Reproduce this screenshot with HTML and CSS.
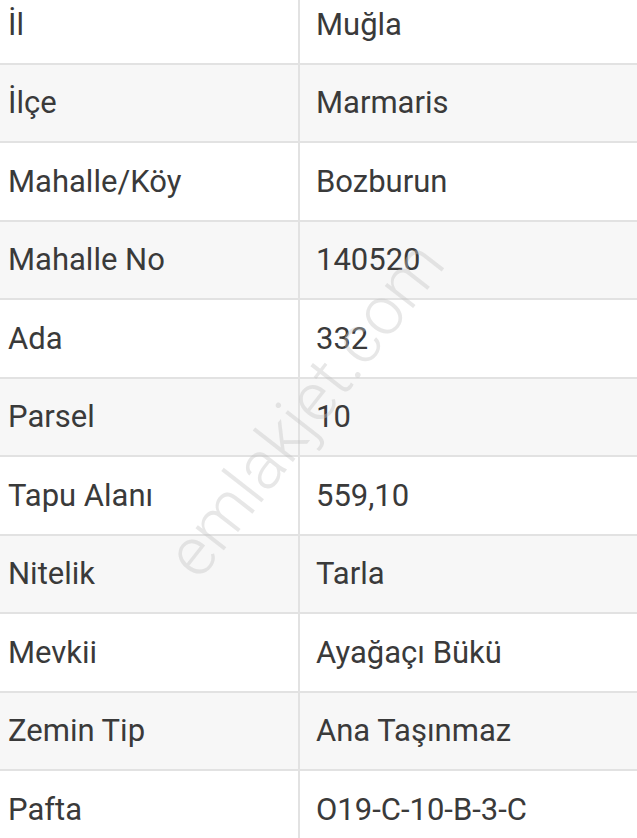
FILE: index.html
```html
<!DOCTYPE html>
<html lang="tr">
<head>
    <meta charset="UTF-8">
    <meta name="viewport" content="width=device-width, initial-scale=1.0">
    <title>Tapu Bilgileri</title>
    <link rel="stylesheet" href="styles.css">
</head>
<body>
    <div id="info-ctn">
        <table id="info-table">
            <tr><td class="label">İl</td><td class="value">Muğla</td></tr>
            <tr><td class="label">İlçe</td><td class="value">Marmaris</td></tr>
            <tr><td class="label">Mahalle/Köy</td><td class="value">Bozburun</td></tr>
            <tr><td class="label">Mahalle No</td><td class="value">140520</td></tr>
            <tr><td class="label">Ada</td><td class="value">332</td></tr>
            <tr><td class="label">Parsel</td><td class="value">10</td></tr>
            <tr><td class="label">Tapu Alanı</td><td class="value">559,10</td></tr>
            <tr><td class="label">Nitelik</td><td class="value">Tarla</td></tr>
            <tr><td class="label">Mevkii</td><td class="value">Ayağaçı Bükü</td></tr>
            <tr><td class="label">Zemin Tip</td><td class="value">Ana Taşınmaz</td></tr>
            <tr><td class="label">Pafta</td><td class="value">O19-C-10-B-3-C</td></tr>
        </table>
        <div class="watermark">emlakjet.com</div>
    </div>
</body>
</html>
```

FILE: styles.css
```css
body {
    margin: 0;
    background-color: #ffffff;
    font-family: Roboto, "Liberation Sans", sans-serif;
    overflow: hidden;
}
#info-ctn {
    position: relative;
    margin-top: -16px;
}
#info-table {
    width: 100%;
    border-collapse: collapse;
    color: #3a3a3a;
    font-size: 31px;
}
#info-table tr {
    height: 78.5px;
}
#info-table tr:nth-child(even) {
    background-color: #f7f7f7;
}
#info-table td {
    border-top: 2px solid #e2e2e2;
    border-bottom: 2px solid #e2e2e2;
    vertical-align: middle;
    padding: 0;
}
.label {
    width: 290px;
    padding-left: 8px !important;
    border-right: 2px solid #e2e2e2;
}
.value {
    padding-left: 16px !important;
}
.watermark {
    position: absolute;
    left: 305px;
    top: 425px;
    transform: translate(-50%, -50%) rotate(-52deg);
    font-size: 68px;
    font-weight: 300;
    color: rgba(195, 195, 195, 0.4);
    white-space: nowrap;
    pointer-events: none;
}
```
